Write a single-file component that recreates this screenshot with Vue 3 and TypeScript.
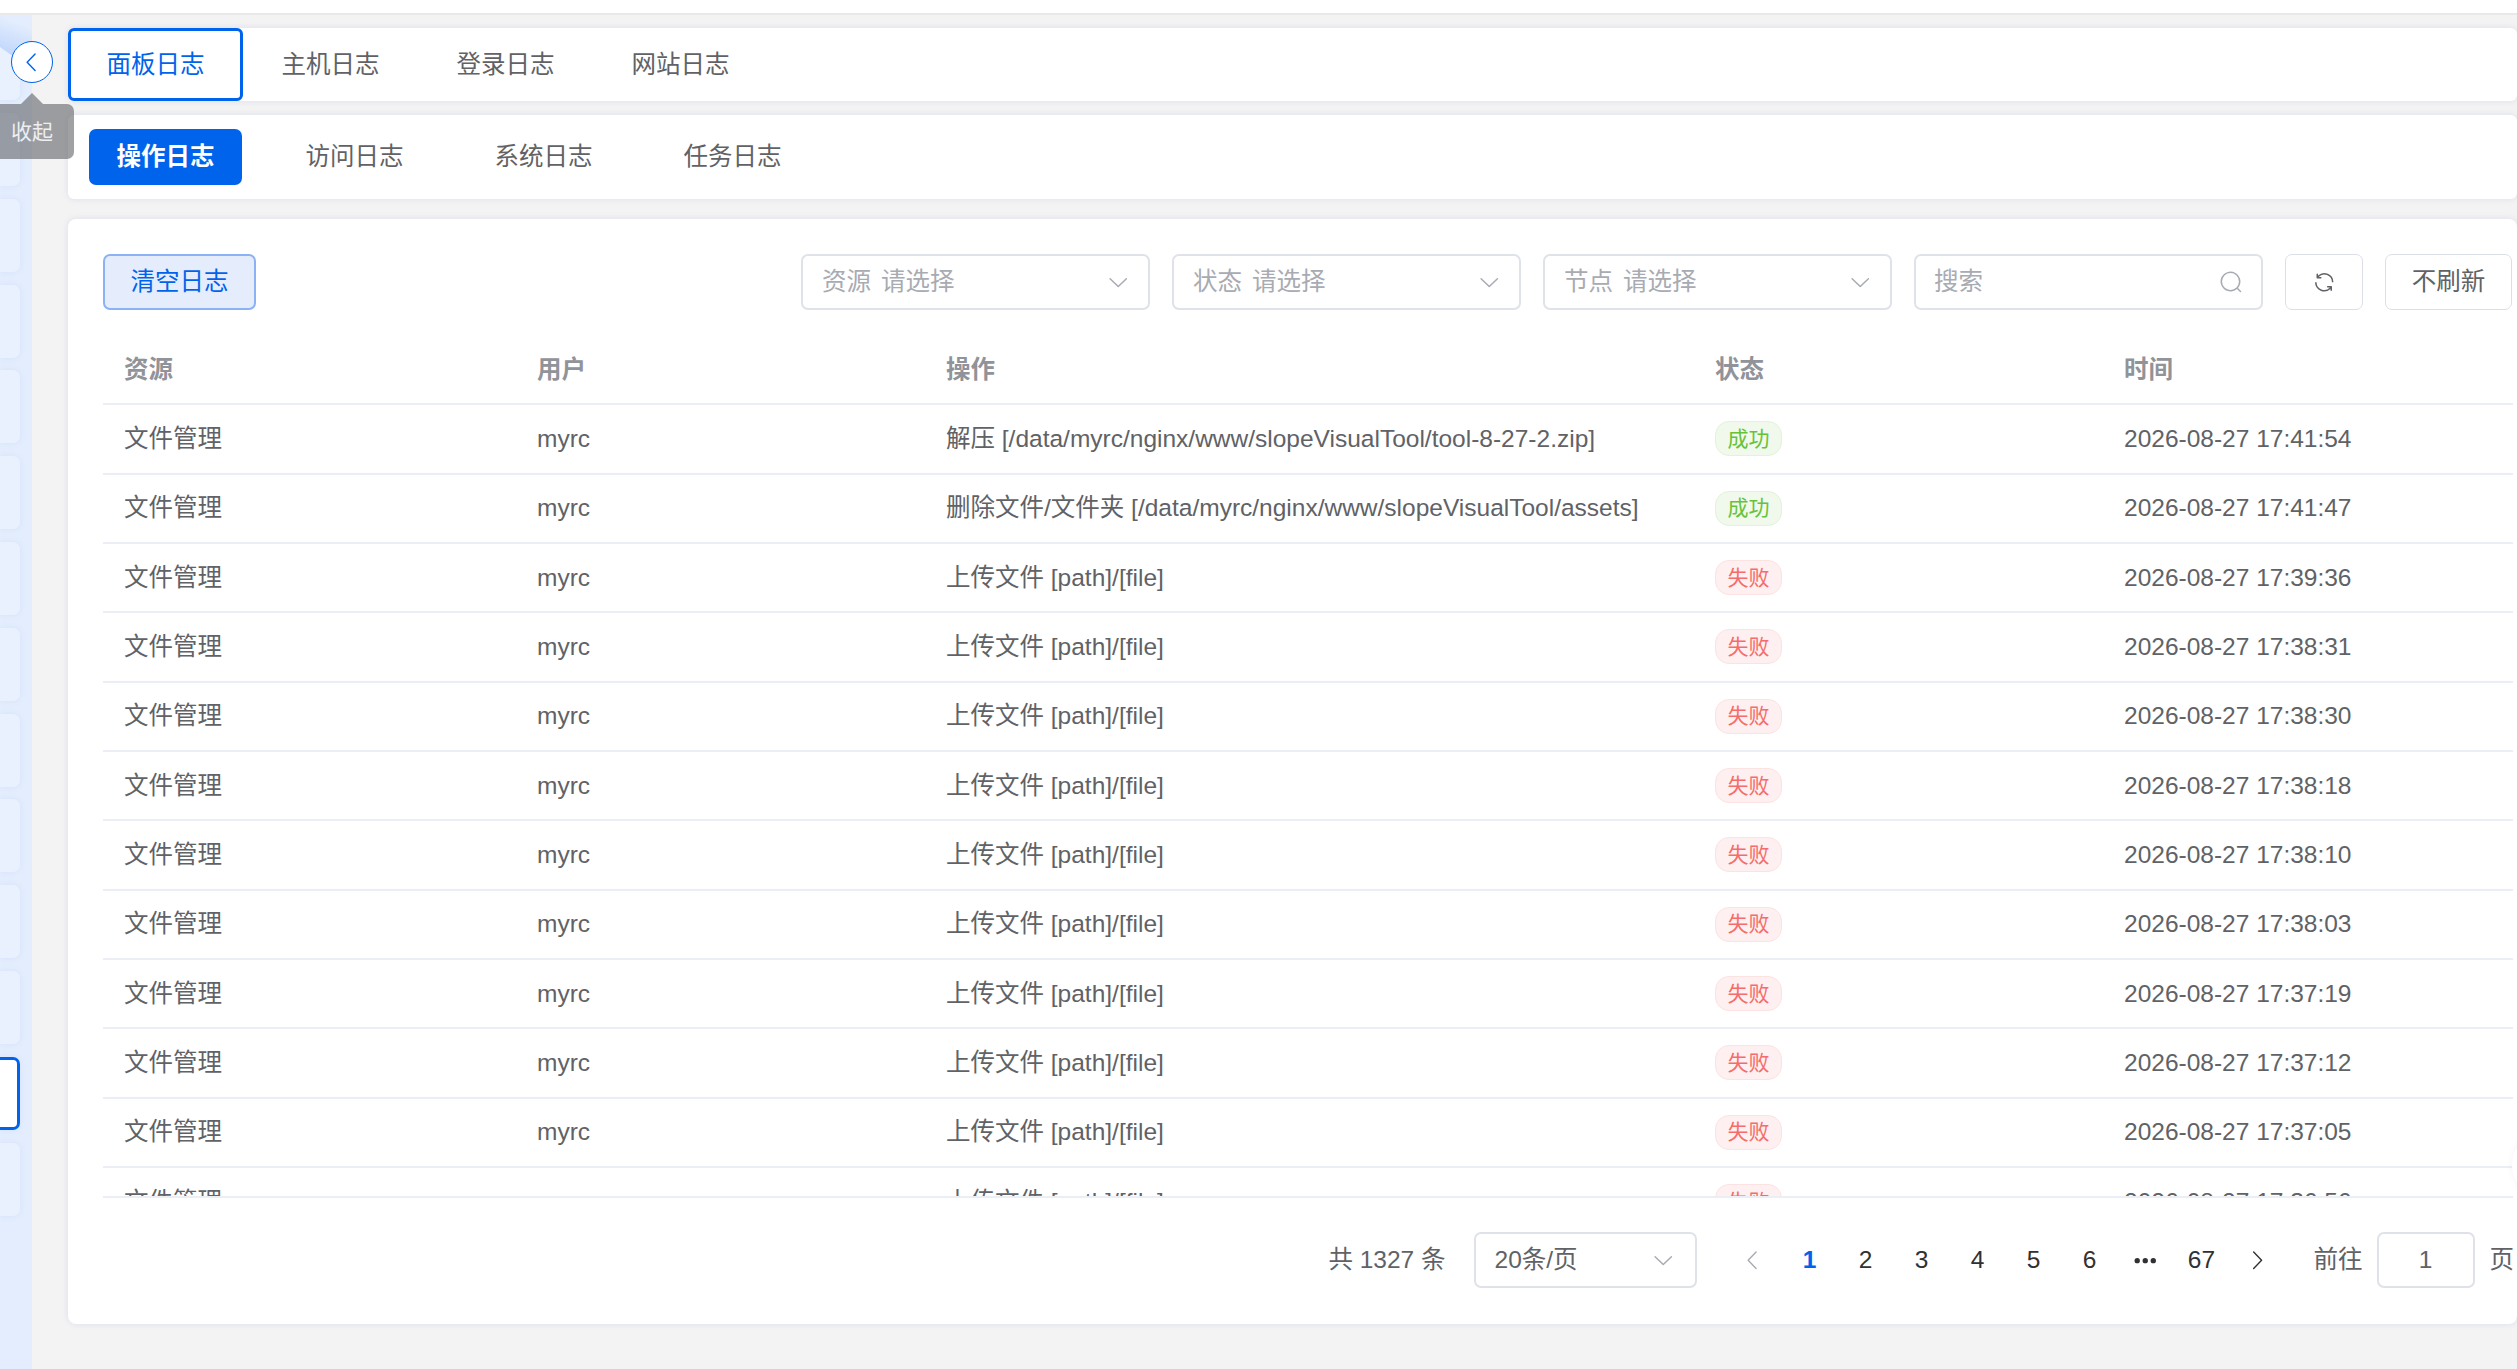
<template>
  <div class="page">
    <div class="topbar"></div>
    <div class="body">
      <!-- narrow menu rail, labels hidden behind the collapse state -->
      <aside class="rail">
        <div class="rail-item rail-item-top"></div>
        <div
          v-for="n in 14"
          :key="n"
          class="rail-item"
          :class="{ 'rail-item-active': n === 13 }"
        ></div>
      </aside>

      <main class="main">
        <nav class="card tabs">
          <div
            v-for="(tab, i) in mainTabs"
            :key="tab"
            class="tab"
            :class="{ 'tab-active': i === 0 }"
          >
            {{ tab }}
          </div>
        </nav>

        <nav class="card subtabs">
          <div
            v-for="(tab, i) in subTabs"
            :key="tab"
            class="subtab"
            :class="{ 'subtab-active': i === 0 }"
          >
            {{ tab }}
          </div>
        </nav>

        <section class="card content">
          <div class="toolbar">
            <button class="btn-clear">清空日志</button>
            <div class="filters">
              <div v-for="f in filters" :key="f" class="field select">
                <span class="prefix">{{ f }}</span>
                <span class="placeholder">请选择</span>
                <svg class="icon arrow" viewBox="0 0 1024 1024"><path :d="icons.down" /></svg>
              </div>
              <div class="field search">
                <span class="placeholder">搜索</span>
                <svg class="icon search-icon" viewBox="0 0 1024 1024"><path :d="icons.search" /></svg>
              </div>
              <button class="btn-plain btn-refresh">
                <svg class="icon refresh-icon" viewBox="0 0 1024 1024"><path :d="icons.refresh" /></svg>
              </button>
              <button class="btn-plain btn-auto">不刷新</button>
            </div>
          </div>

          <div class="table">
            <div class="row head">
              <div class="cell c-res">资源</div>
              <div class="cell c-user">用户</div>
              <div class="cell c-op">操作</div>
              <div class="cell c-status">状态</div>
              <div class="cell c-time">时间</div>
            </div>
            <div v-for="(row, i) in rows" :key="i" class="row">
              <div class="cell c-res">文件管理</div>
              <div class="cell c-user">myrc</div>
              <div class="cell c-op">{{ row.op }}</div>
              <div class="cell c-status">
                <span class="tag" :class="row.ok ? 'tag-ok' : 'tag-fail'">{{ row.ok ? '成功' : '失败' }}</span>
              </div>
              <div class="cell c-time">{{ row.time }}</div>
            </div>
          </div>

          <div class="pagination">
            <span>共 1327 条</span>
            <div class="field page-size">
              <span>20条/页</span>
              <svg class="icon arrow" viewBox="0 0 1024 1024"><path :d="icons.down" /></svg>
            </div>
            <div class="pager">
              <span class="page-btn page-prev">
                <svg class="icon" viewBox="0 0 1024 1024"><path :d="icons.left" /></svg>
              </span>
              <span
                v-for="p in pages"
                :key="p"
                class="page-btn"
                :class="{ 'page-current': p === '1' }"
              >{{ p }}</span>
              <span class="page-btn">
                <svg class="icon more-icon" viewBox="0 0 1024 1024"><path :d="icons.more" /></svg>
              </span>
              <span class="page-btn">67</span>
              <span class="page-btn page-next">
                <svg class="icon" viewBox="0 0 1024 1024"><path :d="icons.right" /></svg>
              </span>
            </div>
            <div class="jump">
              <span>前往</span>
              <div class="field jump-input">1</div>
              <span>页</span>
            </div>
          </div>
        </section>
      </main>

      <!-- collapse control sits over the rail edge -->
      <div class="collapse">
        <svg class="icon" viewBox="0 0 1024 1024"><path :d="icons.left" /></svg>
      </div>
      <div class="tooltip">收起</div>
      <div class="float-ball"></div>
    </div>
  </div>
</template>

<script setup lang="ts">
interface LogRow {
  op: string
  ok: boolean
  time: string
}

const mainTabs = ['面板日志', '主机日志', '登录日志', '网站日志']
const subTabs = ['操作日志', '访问日志', '系统日志', '任务日志']
const filters = ['资源', '状态', '节点']
const pages = ['1', '2', '3', '4', '5', '6']

const upload = '上传文件 [path]/[file]'
const rows: LogRow[] = [
  { op: '解压 [/data/myrc/nginx/www/slopeVisualTool/tool-8-27-2.zip]', ok: true, time: '2026-08-27 17:41:54' },
  { op: '删除文件/文件夹 [/data/myrc/nginx/www/slopeVisualTool/assets]', ok: true, time: '2026-08-27 17:41:47' },
  ...[
    '17:39:36', '17:38:31', '17:38:30', '17:38:18', '17:38:10',
    '17:38:03', '17:37:19', '17:37:12', '17:37:05', '17:36:56'
  ].map((t) => ({ op: upload, ok: false, time: `2026-08-27 ${t}` }))
]

// element-plus icon paths
const icons = {
  down: 'M831.872 340.864 512 652.672 192.128 340.864a30.592 30.592 0 0 0-42.752 0 29.12 29.12 0 0 0 0 41.6L489.664 714.24a32 32 0 0 0 44.672 0l340.288-331.712a29.12 29.12 0 0 0 0-41.728 30.592 30.592 0 0 0-42.752 0z',
  left: 'M609.408 149.376 277.76 489.6a32 32 0 0 0 0 44.672l331.648 340.352a29.12 29.12 0 0 0 41.728 0 30.592 30.592 0 0 0 0-42.752L339.264 511.936l311.872-319.872a30.592 30.592 0 0 0 0-42.688 29.12 29.12 0 0 0-41.728 0z',
  right: 'M340.864 149.312a30.592 30.592 0 0 0 0 42.752L652.736 512 340.864 831.872a30.592 30.592 0 0 0 0 42.752 29.12 29.12 0 0 0 41.728 0L714.24 534.336a32 32 0 0 0 0-44.672L382.592 149.376a29.12 29.12 0 0 0-41.728 0z',
  search: 'm795.904 750.72 124.992 124.928a32 32 0 0 1-45.248 45.248L750.656 795.904a416 416 0 1 1 45.248-45.248zM480 832a352 352 0 1 0 0-704 352 352 0 0 0 0 704z',
  refresh: 'M771.776 794.88A384 384 0 0 1 128 512h64a320 320 0 0 0 555.712 216.448H654.72a32 32 0 1 1 0-64h149.056a32 32 0 0 1 32 32v148.928a32 32 0 1 1-64 0v-50.56zM276.288 295.616h92.992a32 32 0 0 1 0 64H220.16a32 32 0 0 1-32-32V178.56a32 32 0 0 1 64 0v50.56A384 384 0 0 1 896.128 512h-64a320 320 0 0 0-555.776-216.384z',
  more: 'M176 416a112 112 0 1 1 0 224 112 112 0 0 1 0-224m336 0a112 112 0 1 1 0 224 112 112 0 0 1 0-224m336 0a112 112 0 1 1 0 224 112 112 0 0 1 0-224'
}
</script>

<style>
html,
body {
  margin: 0;
  overflow: hidden;
}
</style>

<style scoped>
.page {
  position: relative;
  width: 2517px;
  height: 1369px;
  overflow: hidden;
  background: #f3f3f4;
  font-family: "Liberation Sans", "Noto Sans CJK SC", sans-serif;
  font-size: 24.5px;
  line-height: 28px;
  color: #606266;
}

.topbar {
  height: 13px;
  background: #fff;
  border-bottom: 2px solid #e9e9eb;
}

.body {
  display: flex;
  height: 1354px;
}

.rail {
  flex: none;
  width: 32px;
  padding-top: 12px;
  box-sizing: border-box;
  overflow: hidden;
  background: #e3edfd;
}

.rail-item {
  width: 20px;
  height: 73px;
  margin-bottom: 12.8px;
  border-radius: 0 7px 7px 0;
  background: #e9f1fe;
  box-shadow: 0 0 6px rgba(120, 160, 240, 0.12);
}

.rail-item-top {
  width: 32px;
  height: 40px;
  margin: -12px 0 -27.8px;
  border-radius: 0;
  box-shadow: none;
  background: linear-gradient(200deg, #e3edfd 25%, #bcd4fb 100%);
  clip-path: polygon(0 0, 100% 0, 100% 100%, 35% 100%, 0 80%);
}

.rail-item-active {
  box-sizing: border-box;
  background: #fff;
  border: 3px solid #0063eb;
  border-left: none;
}

.main {
  flex: 1;
  min-width: 0;
  padding: 13px 0 0 36px;
}

.card {
  background: #fff;
  box-shadow: 0 0 6px rgba(90, 100, 160, 0.14);
}

.tabs {
  display: flex;
  height: 73px;
  border-radius: 6px;
}

.tab {
  display: flex;
  flex: none;
  align-items: center;
  justify-content: center;
  box-sizing: border-box;
  width: 175px;
  border-radius: 6px;
}

.tab-active {
  border: 3px solid #0063eb;
  color: #0063eb;
}

.subtabs {
  display: flex;
  gap: 36px;
  height: 84px;
  margin-top: 14px;
  padding: 14px 21px;
  box-sizing: border-box;
  border-radius: 6px;
}

.subtab {
  display: flex;
  flex: none;
  align-items: center;
  justify-content: center;
  width: 153px;
  border-radius: 7px;
}

.subtab-active {
  background: #0063eb;
  color: #fff;
  font-weight: 700;
}

.content {
  display: flex;
  flex-direction: column;
  height: 1105px;
  margin-top: 20px;
  padding: 35px 4px 0 35px;
  box-sizing: border-box;
  border-radius: 8px;
}

.toolbar {
  display: flex;
  align-items: center;
  justify-content: space-between;
  height: 56px;
}

.btn-clear {
  width: 153px;
  height: 56px;
  padding: 0;
  border: 2px solid #8ab2f5;
  border-radius: 7px;
  background: #e5edfd;
  color: #0063eb;
  font: inherit;
}

.filters {
  display: flex;
  gap: 22px;
  margin-right: 1px;
}

.field {
  display: flex;
  align-items: center;
  box-sizing: border-box;
  height: 56px;
  border: 2px solid #dfe2e8;
  border-radius: 7px;
  background: #fff;
}

.select {
  width: 349px;
  padding: 0 18px 0 19px;
}

.search {
  width: 349px;
  padding: 0 18px;
}

.prefix {
  margin-right: 10px;
  color: #a8abb2;
}

.placeholder {
  color: #a8abb2;
}

.icon {
  display: block;
  flex: none;
  width: 24.5px;
  height: 24.5px;
  fill: currentColor;
}

.arrow {
  margin-left: auto;
  color: #a8abb2;
}

.search-icon {
  margin-left: auto;
  color: #a8abb2;
}

.btn-plain {
  display: flex;
  align-items: center;
  justify-content: center;
  box-sizing: border-box;
  height: 56px;
  padding: 0;
  border: 1px solid #dcdfe6;
  border-radius: 7px;
  background: #fff;
  color: #606266;
  font: inherit;
}

.btn-refresh {
  width: 78px;
}

.btn-auto {
  width: 127px;
}

.table {
  flex: none;
  height: 862px;
  margin-top: 26px;
  overflow: hidden;
  border-bottom: 2px solid #ebeef5;
  box-sizing: border-box;
}

.row {
  display: flex;
  align-items: center;
  box-sizing: border-box;
  height: 69.33px;
  border-bottom: 2px solid #ebeef5;
}

.head {
  color: #909399;
  font-weight: 700;
}

.cell {
  flex: none;
  box-sizing: border-box;
  padding-left: 22px;
  white-space: nowrap;
}

.c-res {
  width: 412px;
  padding-left: 21px;
}

.c-user {
  width: 409px;
}

.c-op {
  width: 769px;
}

.c-status {
  width: 409px;
}

.c-time {
  width: 411px;
}

.tag {
  display: inline-flex;
  align-items: center;
  justify-content: center;
  box-sizing: border-box;
  width: 67px;
  height: 35px;
  border: 1px solid;
  border-radius: 14px;
  font-size: 21px;
  vertical-align: middle;
}

.tag-ok {
  background: #f0f9eb;
  border-color: #e1f3d8;
  color: #67c23a;
}

.tag-fail {
  background: #fef0f0;
  border-color: #fde2e2;
  color: #f56c6c;
}

.pagination {
  display: flex;
  align-items: center;
  justify-content: flex-end;
  height: 124px;
  margin-right: -1px;
}

.page-size {
  width: 223px;
  margin-left: 28px;
  padding: 0 19px;
}

.pager {
  display: flex;
  align-items: center;
  margin-left: 29px;
  color: #303133;
}

.page-btn {
  display: flex;
  align-items: center;
  justify-content: center;
  width: 56px;
  height: 56px;
}

.page-prev {
  color: #a8abb2;
}

.page-next {
  color: #303133;
}

.page-current {
  color: #0063eb;
  font-weight: 700;
}

.more-icon {
  width: 24.5px;
}

.jump {
  display: flex;
  align-items: center;
  margin-left: 28px;
}

.jump-input {
  justify-content: center;
  width: 98px;
  margin: 0 15px 0 14px;
}

.collapse {
  position: absolute;
  top: 41px;
  left: 11px;
  display: flex;
  align-items: center;
  justify-content: center;
  box-sizing: border-box;
  width: 42px;
  height: 42px;
  border: 1px solid #0063eb;
  border-radius: 50%;
  background: #fff;
  color: #0063eb;
}

.tooltip {
  position: absolute;
  top: 104px;
  left: 0;
  display: flex;
  align-items: center;
  justify-content: center;
  box-sizing: border-box;
  width: 74px;
  height: 55px;
  padding-right: 10px;
  border-radius: 0 7px 7px 0;
  background: rgba(96, 98, 102, 0.6);
  color: #eceef2;
  font-size: 21px;
}

.tooltip::before {
  content: "";
  position: absolute;
  top: -11px;
  left: 21px;
  border-left: 11px solid transparent;
  border-right: 11px solid transparent;
  border-bottom: 11px solid rgba(96, 98, 102, 0.6);
}

.float-ball {
  position: absolute;
  top: 1130px;
  left: 2512px;
  width: 70px;
  height: 70px;
  border-radius: 50%;
  background: #fff;
  box-shadow: 0 0 6px rgba(90, 100, 160, 0.08);
}
</style>
